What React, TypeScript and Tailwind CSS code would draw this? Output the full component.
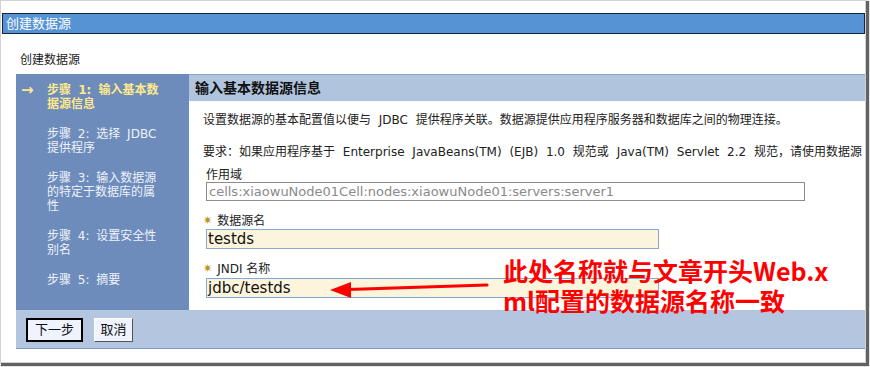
const font = { fontFamily: '"Liberation Sans", "Noto Sans CJK SC", sans-serif' };

const steps = [
  { lines: ['步骤 1: 输入基本数', '据源信息'], active: true },
  { lines: ['步骤 2: 选择 JDBC', '提供程序'], active: false },
  { lines: ['步骤 3: 输入数据源', '的特定于数据库的属', '性'], active: false },
  { lines: ['步骤 4: 设置安全性', '别名'], active: false },
  { lines: ['步骤 5: 摘要'], active: false },
];

function Required() {
  return <span className="mr-[5px] text-[11px] text-[#b8961e]">✷</span>;
}

export default function App() {
  return (
    <div className="relative w-[870px] h-[367px] bg-white overflow-hidden font-['DejaVu_Sans','Noto_Sans_CJK_SC',sans-serif]">
      <div className="w-[866px] h-[363px] border border-[#d2d2d2] bg-white shadow-[2px_2px_1px_1px_rgba(70,70,70,0.85)] overflow-hidden">
        {/* title bar */}
        <div className="mt-[12px] ml-px h-[21px] border border-[#1b2233] bg-[#5593d4] pl-[3px] text-[13px] leading-[19px] text-white">
          创建数据源
        </div>

        <div className="pl-[19px] pt-[19px] pb-[7px] text-[12px] leading-[14px] text-[#222]">创建数据源</div>

        {/* main panel */}
        <div className="ml-[15px] flex h-[236px]">
          <div className="w-[173px] shrink-0 bg-[#6d8cbb] pt-[9px] flex flex-col gap-[16px]">
            {steps.map((s) => (
              <div key={s.lines[0]} className="flex text-[12px] leading-[14px] [word-spacing:3px]">
                <span className={`w-[31px] shrink-0 pl-[5px] text-[15px] leading-[14px] ${s.active ? 'text-[#ffe98a] font-bold' : 'text-transparent'}`}>→</span>
                <div className={s.active ? 'whitespace-nowrap text-[#ffe98a] font-bold' : 'whitespace-nowrap text-[#eef2fa]'}>
                  {s.lines.map((l) => (
                    <div key={l}>{l}</div>
                  ))}
                </div>
              </div>
            ))}
          </div>

          <div className="flex-1 min-w-0">
            <div className="h-[27px] border-t border-[#8aa6cc] bg-[#b1c4de] pl-[6px] text-[14px] font-bold leading-[26px] text-[#111]">
              输入基本数据源信息
            </div>
            <div className="pl-[14px] pt-[12px] text-[12px] leading-[14px] text-[#222] whitespace-nowrap">
              <div className="[word-spacing:4px]">设置数据源的基本配置值以便与 JDBC 提供程序关联。数据源提供应用程序服务器和数据库之间的物理连接。</div>
              <div className="mt-[18px] [word-spacing:4px]">
                要求：如果应用程序基于 Enterprise JavaBeans(TM) (EJB) 1.0 规范或 Java(TM) Servlet 2.2 规范，请使用数据源
              </div>

              <div className="mt-[9px] pl-[3px]">作用域</div>
              <div className="ml-[3px] h-[19px] w-[599px] border border-[#8c8c8c] bg-white pl-[2px] text-[13px] leading-[17px] text-[#8a8a8a]">
                cells:xiaowuNode01Cell:nodes:xiaowuNode01:servers:server1
              </div>

              <div className="mt-[13px] flex items-center">
                <Required />
                数据源名
              </div>
              <div className="mt-px ml-[3px] h-[20px] w-[453px] border border-[#86a9d3] bg-[#fdf4dc] pl-px text-[15px] leading-[18px] text-[#111]">
                testds
              </div>

              <div className="mt-[13px] flex items-center">
                <Required />
                JNDI 名称
              </div>
              <div className="mt-[2px] ml-[3px] h-[20px] w-[453px] border border-[#86a9d3] bg-[#fdf4dc] pl-px text-[15px] leading-[18px] text-[#111]">
                jdbc/testds
              </div>
            </div>
          </div>
        </div>

        {/* footer */}
        <div className="ml-[15px] h-[39px] border-b border-[#7e9bc4] bg-[#b4c6df] pl-[10px] pt-[8px] flex gap-[11px] text-[13px]" style={font}>
          <button className="h-[24px] w-[57px] border-2 border-black bg-[#eef3fd] text-[#111] leading-[18px]">下一步</button>
          <button className="h-[24px] w-[39px] border border-t-white border-l-white border-r-[#555] border-b-[#555] bg-[#eef3fd] text-[#111] leading-[20px]">取消</button>
        </div>
      </div>

      {/* annotation overlay */}
      <svg className="absolute left-0 top-0" width="870" height="367" viewBox="0 0 870 367">
        <line x1="487" y1="285" x2="348" y2="289.5" stroke="#ff0000" strokeWidth="3.2" strokeLinecap="round" />
        <polygon points="330,290 351,282 351,298" fill="#ff0000" />
      </svg>
      <div className="absolute left-[503px] top-[255px] font-['Noto_Sans_CJK_SC',sans-serif] text-[25px] font-bold leading-[30px] text-[#ff0000]">
        <div>此处名称就与文章开头Web.x</div>
        <div>ml配置的数据源名称一致</div>
      </div>
    </div>
  );
}
